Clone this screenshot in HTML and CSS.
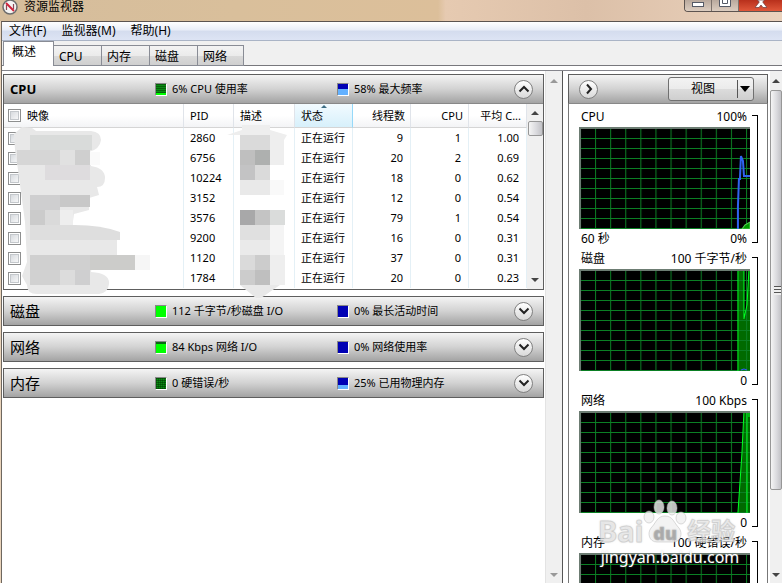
FILE: index.html
```
<!DOCTYPE html>
<html lang="zh-CN">
<head>
  <meta charset="UTF-8">
  <title>资源监视器</title>
  <link rel="stylesheet" href="styles.css">
</head>
<body>
  <header class="titlebar">
    <svg class="app-icon" width="16" height="16" viewBox="0 0 16 16">
      <circle cx="8" cy="7" r="7" fill="#f4f4f4" stroke="#6d6d6d" stroke-width="1.5"/>
      <path d="M4.500 10V5M11.500 9V4" stroke="#8c4a55" stroke-width="1.200"/>
      <path d="M4 3l8 8" stroke="#d0203a" stroke-width="2"/>
    </svg>
    <h1 class="title">资源监视器</h1>
    <div class="window-buttons">
      <button class="win-btn" aria-label="最小化">
        <svg width="12" height="7" viewBox="0 0 12 7"><rect x=".5" y="2.5" width="11" height="4" fill="#fff" stroke="#555a66"/></svg>
      </button>
      <button class="win-btn" aria-label="最大化">
        <svg width="12" height="8" viewBox="0 0 12 8"><path d="M.5 0v6.500h11V0M3.500 0v3.500h5V0" fill="#fff" stroke="#555a66"/></svg>
      </button>
      <button class="win-btn close" aria-label="关闭">
        <svg width="12" height="8" viewBox="0 0 12 8"><path d="M0 7.500L4.300 2 2.500 0h7L7.700 2 12 7.500H8L6 5 4 7.500z" fill="#fff" stroke="#6b3a3a" stroke-width=".7"/></svg>
      </button>
    </div>
  </header>

  <div class="window">
    <nav class="menubar">
      <button class="menu">文件(F)</button>
      <button class="menu">监视器(M)</button>
      <button class="menu">帮助(H)</button>
    </nav>

    <div class="tabs" role="tablist">
      <button class="tab active" role="tab" aria-selected="true">概述</button>
      <button class="tab" role="tab">CPU</button>
      <button class="tab" role="tab">内存</button>
      <button class="tab" role="tab">磁盘</button>
      <button class="tab" role="tab">网络</button>
    </div>

    <main class="content">
      <div class="sections">
        <section class="card">
          <div class="card-head">
            <h2 class="card-title bold">CPU</h2>
            <span class="stat"><i class="led green low"></i>6% CPU 使用率</span>
            <span class="stat"><i class="led blue half"></i>58% 最大频率</span>
            <button class="round up" aria-label="折叠"><svg width="12" height="8" viewBox="0 0 12 8"><path d="M1.500 6.500L6 2l4.500 4.500"/></svg></button>
          </div>
          <div class="table-wrap">
            <table class="processes">
              <colgroup>
                <col><col class="c-pid"><col class="c-desc"><col class="c-num"><col class="c-num"><col class="c-num"><col class="c-avg">
              </colgroup>
              <thead>
                <tr>
                  <th><label><input type="checkbox">映像</label></th>
                  <th>PID</th>
                  <th>描述</th>
                  <th class="sorted">状态</th>
                  <th class="num">线程数</th>
                  <th class="num">CPU</th>
                  <th class="num">平均 C...</th>
                </tr>
              </thead>
              <tbody id="rows"></tbody>
            </table>
            <div class="scrollbar inner">
              <i class="arrow-up"></i>
              <i class="thumb"></i>
              <i class="arrow-down"></i>
            </div>
            <!-- pixelated names and descriptions -->
            <svg class="mosaic" width="290" height="180" viewBox="0 0 290 180">
              <path d="M10 14l8-7 10 1 4 3h55q10 1 10 9-1 9-12 12l2 14q14 2 14 12 0 9-8 9l2 8-10 3v12l-15 4-2 14q24-1 45 9v23l-20 4q-5 0-6 8 19 1 18 12-1 9-10 10H33q-10 0-10-9l-5-9 5-14-2-40-7-52-3-20z" fill="#e8e8e8"/>
              <g>
                <rect x="26" y="15" width="62" height="15" fill="#d9dbda"/>
                <rect x="13" y="30" width="43" height="15" fill="#d6d6d6"/>
                <rect x="56" y="30" width="15" height="15" fill="#e1e1e1"/>
                <rect x="71" y="30" width="15" height="15" fill="#cfcfcf"/>
                <rect x="86" y="32" width="10" height="13" fill="#fafafa"/>
                <rect x="41" y="45" width="45" height="15" fill="#dedcde"/>
                <rect x="26" y="75" width="30" height="15" fill="#cfcfd0"/>
                <rect x="56" y="75" width="30" height="12" fill="#c8c8c8"/>
                <rect x="26" y="90" width="15" height="15" fill="#cbcbcb"/>
                <rect x="41" y="90" width="15" height="15" fill="#dadada"/>
                <rect x="56" y="90" width="13" height="15" fill="#eee"/>
                <path d="M26 105h45q26 0 45 7v8H26z" fill="#dedede"/>
                <rect x="26" y="135" width="60" height="15" fill="#d0d0d0"/>
                <rect x="86" y="135" width="45" height="15" fill="#ccccca"/>
                <rect x="131" y="135" width="15" height="15" fill="#f6f6f6"/>
                <rect x="26" y="150" width="30" height="15" fill="#d1d1d1"/>
                <rect x="56" y="150" width="15" height="15" fill="#dcdcdc"/>
                <rect x="71" y="150" width="15" height="15" fill="#cfcfd0"/>
              </g>
              <path d="M223 15l15-5v-5h28v5l17 5-3 5v25h-44V15z" fill="#eee"/>
              <g>
                <rect x="236" y="15" width="30" height="15" fill="#dadada"/>
                <rect x="236" y="30" width="15" height="15" fill="#bfbfbf"/>
                <rect x="251" y="30" width="15" height="15" fill="#aeb0af"/>
                <rect x="236" y="45" width="15" height="15" fill="#c3c3c4"/>
                <rect x="251" y="45" width="15" height="15" fill="#dadada"/>
                <rect x="236" y="60" width="30" height="15" fill="#e9e9e9"/>
                <rect x="266" y="60" width="14" height="15" fill="#f9f9f9"/>
                <rect x="236" y="90" width="15" height="15" fill="#a8a8a9"/>
                <rect x="251" y="90" width="15" height="15" fill="#c4c4c4"/>
                <rect x="266" y="90" width="15" height="15" fill="#dadcdb"/>
                <rect x="236" y="105" width="30" height="15" fill="#e0e0e0"/>
                <rect x="266" y="105" width="14" height="30" fill="#f4f4f4"/>
                <rect x="236" y="120" width="30" height="15" fill="#eaeaea"/>
                <rect x="236" y="135" width="15" height="15" fill="#dadada"/>
                <rect x="251" y="135" width="15" height="15" fill="#ccc"/>
                <rect x="236" y="150" width="15" height="15" fill="#ccc"/>
                <rect x="251" y="150" width="15" height="15" fill="#bfbfbf"/>
                <rect x="266" y="135" width="15" height="30" fill="#eee"/>
                <path d="M236 165h40l-19 13h-5z" fill="#e8e8e8"/>
              </g>
            </svg>
          </div>
        </section>

        <section class="card">
          <div class="card-head">
            <h2 class="card-title">磁盘</h2>
            <span class="stat"><i class="led lime"></i>112 千字节/秒磁盘 I/O</span>
            <span class="stat"><i class="led blue"></i>0% 最长活动时间</span>
            <button class="round" aria-label="展开"><svg width="12" height="8" viewBox="0 0 12 8"><path d="M1.500 1.500L6 6l4.500-4.500"/></svg></button>
          </div>
        </section>

        <section class="card">
          <div class="card-head">
            <h2 class="card-title">网络</h2>
            <span class="stat"><i class="led green high"></i>84 Kbps 网络 I/O</span>
            <span class="stat"><i class="led blue"></i>0% 网络使用率</span>
            <button class="round" aria-label="展开"><svg width="12" height="8" viewBox="0 0 12 8"><path d="M1.500 1.500L6 6l4.500-4.500"/></svg></button>
          </div>
        </section>

        <section class="card">
          <div class="card-head">
            <h2 class="card-title">内存</h2>
            <span class="stat"><i class="led green"></i>0 硬错误/秒</span>
            <span class="stat"><i class="led blue quarter"></i>25% 已用物理内存</span>
            <button class="round" aria-label="展开"><svg width="12" height="8" viewBox="0 0 12 8"><path d="M1.500 1.500L6 6l4.500-4.500"/></svg></button>
          </div>
        </section>
      </div>

      <div class="scrollbar middle">
        <i class="arrow-up"></i>
        <i class="arrow-down"></i>
      </div>

      <aside class="graphs">
        <div class="card-head">
          <button class="round" aria-label="隐藏图表"><svg width="8" height="12" viewBox="0 0 8 12"><path d="M2 1.500L6 6l-4 4.500"/></svg></button>
          <button class="view-btn"><span class="view-text">视图</span><i class="view-arrow"></i></button>
        </div>
        <div class="charts">
          <svg width="0" height="0" class="defs">
            <defs>
              <pattern id="grid" x="1" y="1" width="15" height="10" patternUnits="userSpaceOnUse">
                <path d="M.5 0v10M0 .5h15" stroke="#0b7f24" stroke-width="1"/>
              </pattern>
            </defs>
          </svg>

          <div class="chart">
            <div class="chart-main">
              <div class="chart-label"><span>CPU</span><span>100%</span></div>
              <svg class="plot" viewBox="0 0 170 102" preserveAspectRatio="none">
                <rect width="170" height="102" fill="#000"/>
                <rect width="170" height="102" fill="url(#grid)"/>
                <path d="M162 102l3-4 5-3v7z" fill="#009a00" stroke="#5c5"/>
                <path d="M158 102V80l1-28h1l1-23 2 5 1 15h6" fill="none" stroke="#2f63f0" stroke-width="2"/>
                <path d="M0 1h170M1 0v102" stroke="#6c7c72" stroke-width="2"/>
              </svg>
              <div class="chart-label"><span>60 秒</span><span>0%</span></div>
            </div>
            <i class="bracket"></i>
          </div>

          <div class="chart">
            <div class="chart-main">
              <div class="chart-label"><span>磁盘</span><span>100 千字节/秒</span></div>
              <svg class="plot" viewBox="0 0 170 102" preserveAspectRatio="none">
                <rect width="170" height="102" fill="#000"/>
                <path d="M158 0h6v50l3-14 2-36h1v102h-12z" fill="#006a00"/>
                <rect width="170" height="102" fill="url(#grid)"/>
                <path d="M158 102V0M164 0v50l3-14 2-36" fill="none" stroke="#0f2"/>
                <path d="M161 101l3-1 3 1" stroke="#2f63f0"/>
                <path d="M0 1h170M1 0v102" stroke="#6c7c72" stroke-width="2"/>
              </svg>
              <div class="chart-label"><span></span><span>0</span></div>
            </div>
            <i class="bracket"></i>
          </div>

          <div class="chart">
            <div class="chart-main">
              <div class="chart-label"><span>网络</span><span>100 Kbps</span></div>
              <svg class="plot" viewBox="0 0 170 102" preserveAspectRatio="none">
                <rect width="170" height="102" fill="#000"/>
                <path d="M158 102l2-30 2-30 2-42h6v102z" fill="#006a00"/>
                <rect width="170" height="102" fill="url(#grid)"/>
                <path d="M158 102l2-30 2-30 2-42M167 0v102M169 0v6" fill="none" stroke="#0f2"/>
                <path d="M0 1h170M1 0v102" stroke="#6c7c72" stroke-width="2"/>
              </svg>
              <div class="chart-label"><span></span><span>0</span></div>
            </div>
            <i class="bracket"></i>
          </div>

          <div class="chart">
            <div class="chart-main">
              <div class="chart-label"><span>内存</span><span>100 硬错误/秒</span></div>
              <svg class="plot" viewBox="0 0 170 102" preserveAspectRatio="none">
                <rect width="170" height="102" fill="#000"/>
                <rect width="170" height="102" fill="url(#grid)"/>
                <path d="M0 1h170M1 0v102" stroke="#6c7c72" stroke-width="2"/>
              </svg>
            </div>
            <i class="bracket"></i>
          </div>
        </div>
      </aside>

      <div class="scrollbar outer">
        <i class="arrow-up"></i>
        <i class="thumb"></i>
        <i class="arrow-down"></i>
      </div>
    </main>
  </div>

  <div class="watermark">
    <div class="brand"><span>Bai</span><span class="paw"><svg width="44" height="45" viewBox="0 0 44 45"><ellipse cx="16" cy="8" rx="5" ry="7"/><ellipse cx="29" cy="9" rx="5" ry="7"/><ellipse cx="6" cy="18" rx="5" ry="6"/><ellipse cx="38" cy="19" rx="5" ry="6"/><path d="M22 17c-8 0-9 7-14 12-4 5-2 14 6 14h16c8 0 10-9 6-14-5-5-6-12-14-12z"/></svg><b>du</b></span><span class="cn">经验</span></div>
    <div class="site">jingyan.baidu.com</div>
  </div>

  <script>
    const processes = [
      [2860, 9, 1, '1.00'],
      [6756, 20, 2, '0.69'],
      [10224, 18, 0, '0.62'],
      [3152, 12, 0, '0.54'],
      [3576, 79, 1, '0.54'],
      [9200, 16, 0, '0.31'],
      [1120, 37, 0, '0.31'],
      [1784, 20, 0, '0.23']
    ];

    document.getElementById('rows').innerHTML = processes.map(([pid, threads, cpu, avg]) => `
      <tr>
        <td><input type="checkbox" aria-label="${pid}"></td>
        <td>${pid}</td>
        <td></td>
        <td>正在运行</td>
        <td class="num">${threads}</td>
        <td class="num">${cpu}</td>
        <td class="num">${avg}</td>
      </tr>`).join('');
  </script>
</body>
</html>
```

FILE: styles.css
```
* {
  box-sizing: border-box;
}
body {
  margin: 0;
  height: 100vh;
  display: flex;
  flex-direction: column;
  overflow: hidden;
  position: relative;
  font-family: "Noto Sans", "Noto Sans CJK SC", sans-serif;
  font-size: 12px;
  line-height: 16px;
  color: #000;
  background: #e9d3ba;
}
button {
  font: inherit;
  color: inherit;
  padding: 0;
  border: none;
  background: none;
}
h1, h2 {
  margin: 0;
  font-weight: normal;
}

/* title bar */
.titlebar {
  display: flex;
  flex: none;
  height: 21px;
  padding-left: 2px;
  background: linear-gradient(90deg, #d5bd9c 0%, #d9bf9b 30%, #dcbf9a 56%, #e6cab1 57%, #dcc0a8 75%, #ead2bd 100%);
}
.app-icon {
  margin-right: 6px;
}
.title {
  font-size: 12px;
  line-height: 14px;
}
.window-buttons {
  display: flex;
  width: 98px;
  height: 12px;
  margin-left: auto;
  border: 1px solid #5d5450;
  border-width: 0 0 1px 1px;
  border-radius: 0 0 0 4px;
  overflow: hidden;
}
.win-btn {
  display: flex;
  justify-content: center;
  width: 27px;
  border-right: 1px solid #7d726c;
  background: linear-gradient(#b9a99d, #dccdc0);
}
.win-btn.close {
  flex: 1;
  border: none;
  background: linear-gradient(#b8301c, #e0573a);
}

.window {
  flex: 1;
  min-height: 0;
  display: flex;
  flex-direction: column;
  margin-left: 1px;
  border-top: 1px solid #5b5450;
  border-left: 1px solid #6e675f;
  background: #fff;
}
.menubar {
  display: flex;
  flex: none;
  gap: 15px;
  height: 19px;
  padding-left: 7px;
  border-bottom: 1px solid #aab4c6;
  background: linear-gradient(#fff 0%, #e8edf7 45%, #d4dcee 50%, #dde4f4 100%);
}
.tabs {
  display: flex;
  flex: none;
  align-items: flex-end;
  height: 30px;
  padding: 0 0 4px 1px;
  border-bottom: 1px solid #85858c;
  background: linear-gradient(#f0f0f0 24px, #77777c 24px, #77777c 25px, #fff 25px);
}
.tab {
  width: 48px;
  height: 21px;
  padding: 2px 0 0 5px;
  text-align: left;
  border: 1px solid #898c95;
  border-left: none;
  background: linear-gradient(#f3f3f3, #ebebeb 50%, #dadada 50%, #cfcfcf);
}
.tab:last-child {
  width: 46px;
}
.tab.active {
  width: 51px;
  height: 25px;
  padding: 0 0 4px 8px;
  border-left: 1px solid #898c95;
  border-bottom: none;
  background: #fff;
}

.content {
  flex: 1;
  min-height: 0;
  display: flex;
}
.sections {
  flex: 1;
  display: flex;
  flex-direction: column;
  gap: 6px;
  padding: 3px 1px;
}
.card {
  border: 1px solid #5e5e5e;
}
.card-head {
  display: flex;
  align-items: center;
  height: 28px;
  padding: 0 9px 0 6px;
  font-size: 11px;
  background: linear-gradient(#f4f4f4, #d2d2d2 50%, #a3a3a3);
}
.card .card-head {
  display: grid;
  grid-template-columns: 145px 182px 1fr 20px;
}
.card-title {
  font-size: 15px;
}
.card-title.bold {
  font-size: 13px;
  font-weight: bold;
}
.stat {
  display: flex;
  align-items: center;
  gap: 5px;
}
.led {
  width: 12px;
  height: 13px;
  border: 1px solid #888;
  border-right-color: #fff;
  border-bottom-color: #fff;
}
.led.green {
  background: repeating-linear-gradient(#003c0099 0 1px, transparent 1px 2px), repeating-linear-gradient(90deg, #003c0066 0 1px, transparent 1px 2px), #0a8a14;
}
.led.green.low {
  background: linear-gradient(transparent 9px, #0f0 9px), repeating-linear-gradient(#003c0088 0 1px, transparent 1px 2px), #0a8a14;
}
.led.green.high {
  background: linear-gradient(#0a6a14 2px, #0f0 2px);
}
.led.lime {
  background: #0f0;
}
.led.blue {
  background: #0000b4;
}
.led.half {
  background: linear-gradient(#0000b4 5px, #63b1ff 5px);
}
.led.quarter {
  background: linear-gradient(#0000b4 7px, #63b1ff 7px);
}
.round {
  display: flex;
  align-items: center;
  justify-content: center;
  width: 19px;
  height: 19px;
  border: 1px solid #808080;
  border-radius: 50%;
  background: linear-gradient(#fff, #d9d9d9);
}
.round path {
  fill: none;
  stroke: #222;
  stroke-width: 2;
}

/* process table */
.table-wrap {
  display: flex;
  position: relative;
  height: 186px;
  border-top: 1px solid #888;
}
.processes {
  flex: 1;
  align-self: flex-start;
  table-layout: fixed;
  width: 100%;
  border-collapse: separate;
  border-spacing: 0;
  font-size: 11px;
}
.c-pid { width: 50px; }
.c-desc { width: 61px; }
.c-num { width: 58px; }
.c-avg { width: 58px; }
.processes th {
  height: 24px;
  padding: 0 6px;
  font-weight: normal;
  text-align: left;
  white-space: nowrap;
  border-right: 1px solid #e0e4ea;
  border-bottom: 1px solid #d5d5d5;
  background: linear-gradient(#fff 50%, #f3f4f6);
}
.processes td {
  height: 20px;
  padding: 0 6px;
  border-right: 1px solid #e4f0f6;
}
.processes th:first-child,
.processes td:first-child {
  padding-left: 4px;
}
.processes label {
  display: flex;
  align-items: center;
  gap: 6px;
}
.processes .num {
  text-align: right;
  padding-right: 7px;
}
.processes th.num {
  padding-right: 5px;
}
.processes th.sorted {
  position: relative;
  border-right-color: #96d9f9;
  background: linear-gradient(#f2fbff, #d7f0fb);
}
.sorted::before {
  content: "";
  position: absolute;
  top: 1px;
  left: 26px;
  border: 3px solid transparent;
  border-top: none;
  border-bottom-color: #3c6d84;
}
input[type="checkbox"] {
  appearance: none;
  display: block;
  width: 13px;
  height: 13px;
  margin: 0;
  border: 1px solid #8e8f8f;
  background: linear-gradient(135deg, #cfd3d8, #fff);
  box-shadow: inset 0 0 0 1px #fff, inset 0 0 0 2px #c4c8cc;
}
.mosaic {
  position: absolute;
  top: 16px;
  left: 0;
}

/* scrollbars */
.scrollbar {
  display: flex;
  flex: none;
  flex-direction: column;
  align-items: center;
  background: #f0f0f0;
}
.scrollbar.inner {
  width: 16px;
  padding: 7px 0;
}
.scrollbar.middle {
  width: 17px;
  padding: 8px 0 6px;
  border-left: 1px solid #e3e3e3;
}
.scrollbar.outer {
  width: 12px;
  padding: 8px 0 6px;
}
.arrow-up {
  border: 4px solid transparent;
  border-top: none;
  border-bottom-color: #444;
}
.arrow-down {
  margin-top: auto;
  border: 4px solid transparent;
  border-bottom: none;
  border-top-color: #444;
}
.middle .arrow-up { border-bottom-color: #999; }
.middle .arrow-down { border-top-color: #999; }
.thumb {
  border: 1px solid #979797;
  border-radius: 2px;
  background: linear-gradient(90deg, #f5f5f5, #d8d8dc 60%, #c2c2c6);
}
.inner .thumb {
  width: 15px;
  height: 15px;
  margin-top: 6px;
}
.outer .thumb {
  width: 12px;
  height: 400px;
  margin-top: 7px;
  background: repeating-linear-gradient(#555 0 1px, #eee 1px 3px) 3px 195px / 9px 9px no-repeat, linear-gradient(90deg, #f5f5f5, #d8d8dc 60%, #c2c2c6);
}

/* graphs */
.graphs {
  flex: none;
  width: 208px;
  padding: 3px 2px 0 5px;
  border-left: 1px solid #555;
  overflow: hidden;
}
.graphs .card-head {
  justify-content: space-between;
  height: 30px;
  padding: 0 13px 0 10px;
  border: 1px solid #5e5e5e;
  border-bottom-color: #888;
}
.view-btn {
  display: flex;
  align-items: center;
  width: 86px;
  height: 24px;
  font-size: 12px;
  border: 1px solid #707070;
  border-radius: 3px;
  background: linear-gradient(#f3f3f3, #ebebeb 50%, #dcdcdc 50%, #cfcfcf);
}
.view-text {
  flex: 1;
}
.view-arrow {
  display: flex;
  align-items: center;
  width: 16px;
  height: 18px;
  padding-left: 2px;
  border-left: 1px solid #555;
}
.view-arrow::after {
  content: "";
  border: 5px solid transparent;
  border-top: 6px solid #000;
  border-bottom: none;
}
.charts {
  height: 600px;
  padding: 3px 9px 0 10px;
  border: 1px solid #777;
  border-top: none;
}
.defs {
  display: block;
}
.chart {
  display: flex;
  height: 142px;
}
.chart-main {
  flex: 1;
}
.chart-label {
  display: flex;
  justify-content: space-between;
  height: 20px;
  padding: 0 3px 0 2px;
  line-height: 20px;
}
.plot {
  display: block;
  width: 100%;
  height: 102px;
}
.bracket {
  width: 6px;
  margin: 8px 0 6px 2px;
  border: 1px solid #000;
  border-left: none;
}

.watermark {
  position: absolute;
  right: 40px;
  bottom: 16px;
  width: 144px;
  color: #fff;
  text-shadow: 0 0 2px #8888;
}
.brand {
  display: flex;
  align-items: flex-end;
  height: 48px;
  font-size: 29px;
  line-height: 32px;
  font-weight: bold;
  color: #fff9;
  -webkit-text-stroke: 1px #bbb8;
}
.paw {
  position: relative;
  height: 48px;
}
.paw svg {
  display: block;
  fill: #f0f0f0cc;
  stroke: #bbb8;
}
.paw b {
  position: absolute;
  left: 10px;
  bottom: 2px;
  font-size: 18px;
  line-height: 24px;
  color: #aaa;
}
.cn {
  font-size: 24px;
}
.site {
  font-size: 16px;
  line-height: 20px;
  text-align: center;
}
```
